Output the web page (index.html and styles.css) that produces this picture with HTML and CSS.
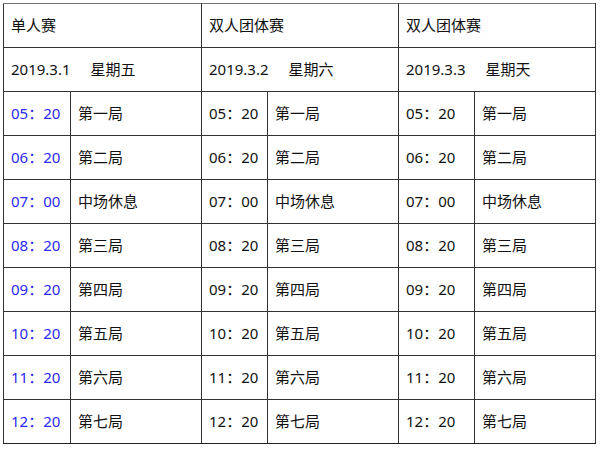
FILE: index.html
```html
<!DOCTYPE html>
<html lang="zh">
<head>
<meta charset="utf-8">
<link rel="stylesheet" href="styles.css">
</head>
<body>
<table class="schedule">
  <colgroup>
    <col class="c1"><col class="c2"><col class="c3"><col class="c4"><col class="c5"><col class="c6">
  </colgroup>
  <tr><td colspan="2">单人赛</td><td colspan="2">双人团体赛</td><td colspan="2">双人团体赛</td></tr>
  <tr><td colspan="2">2019.3.1<span class="day">星期五</span></td><td colspan="2">2019.3.2<span class="day">星期六</span></td><td colspan="2">2019.3.3<span class="day">星期天</span></td></tr>
  <tr><td class="blue">05：20</td><td>第一局</td><td>05：20</td><td>第一局</td><td>05：20</td><td>第一局</td></tr>
  <tr><td class="blue">06：20</td><td>第二局</td><td>06：20</td><td>第二局</td><td>06：20</td><td>第二局</td></tr>
  <tr><td class="blue">07：00</td><td>中场休息</td><td>07：00</td><td>中场休息</td><td>07：00</td><td>中场休息</td></tr>
  <tr><td class="blue">08：20</td><td>第三局</td><td>08：20</td><td>第三局</td><td>08：20</td><td>第三局</td></tr>
  <tr><td class="blue">09：20</td><td>第四局</td><td>09：20</td><td>第四局</td><td>09：20</td><td>第四局</td></tr>
  <tr><td class="blue">10：20</td><td>第五局</td><td>10：20</td><td>第五局</td><td>10：20</td><td>第五局</td></tr>
  <tr><td class="blue">11：20</td><td>第六局</td><td>11：20</td><td>第六局</td><td>11：20</td><td>第六局</td></tr>
  <tr><td class="blue">12：20</td><td>第七局</td><td>12：20</td><td>第七局</td><td>12：20</td><td>第七局</td></tr>
</table>
</body>
</html>
```
FILE: styles.css
```css
html, body {
  margin: 0;
  padding: 0;
  background: #fff;
}
body {
  padding: 3px 0 0 3px;
  font-family: "Noto Sans", "Noto Sans CJK SC", sans-serif;
  font-size: 15px;
  color: #111;
}
.schedule {
  border-collapse: collapse;
  table-layout: fixed;
  width: 593px;
  border: 1px solid #777;
}
.c1 { width: 67px; }
.c2 { width: 131px; }
.c3 { width: 66px; }
.c4 { width: 131px; }
.c5 { width: 76px; }
.c6 { width: 121px; }
.schedule tr { height: 44px; }
.schedule td {
  border: 1px solid #333;
  padding: 0 0 2px 7px;
  vertical-align: middle;
  white-space: nowrap;
  line-height: 20px;
}
.schedule tr:first-child td { border-top-color: #777; }
.schedule tr:last-child td { border-bottom-color: #222; }
.day {
  margin-left: 20px;
}
.blue {
  color: #2a2af5;
}
```
